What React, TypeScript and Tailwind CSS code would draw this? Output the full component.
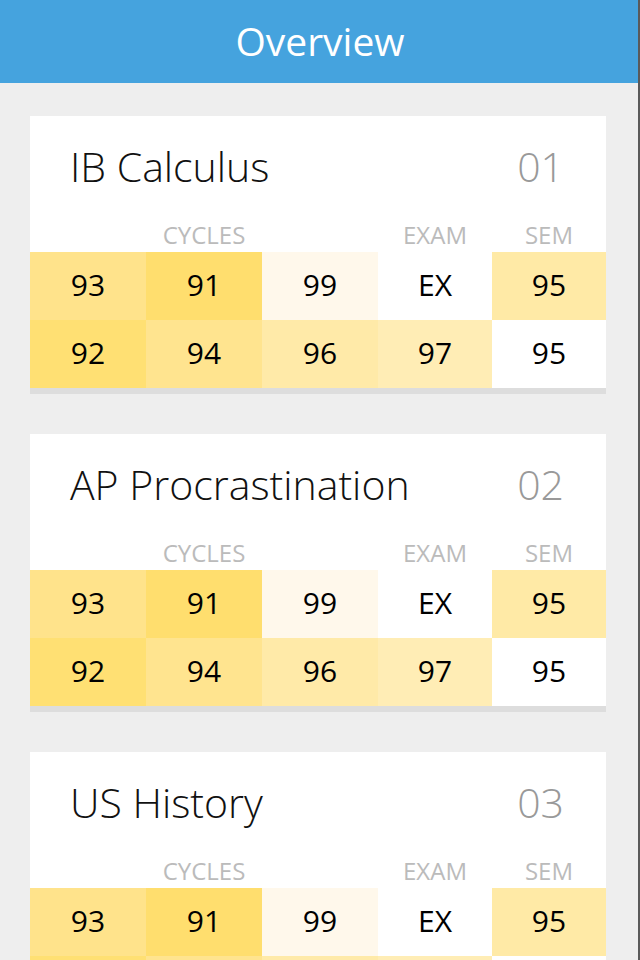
import React from "react";

interface Cell {
  value: string;
  bg: string;
}

interface Course {
  name: string;
  period: string;
  rows: Cell[][];
}

// Cell shading follows the grade: lower grade, deeper yellow
const gradeRows: Cell[][] = [
  [
    { value: "93", bg: "bg-[#ffe38b]" },
    { value: "91", bg: "bg-[#ffde6e]" },
    { value: "99", bg: "bg-[#fff8eb]" },
    { value: "EX", bg: "bg-white" },
    { value: "95", bg: "bg-[#ffeaa6]" },
  ],
  [
    { value: "92", bg: "bg-[#ffe073]" },
    { value: "94", bg: "bg-[#ffe48f]" },
    { value: "96", bg: "bg-[#ffeaa8]" },
    { value: "97", bg: "bg-[#ffedb5]" },
    { value: "95", bg: "bg-white" },
  ],
];

const COURSES: Course[] = [
  { name: "IB Calculus", period: "01", rows: gradeRows },
  { name: "AP Procrastination", period: "02", rows: gradeRows },
  { name: "US History", period: "03", rows: gradeRows },
];

const cols = "grid grid-cols-[116px_116px_116px_114px_114px]";

const CourseCard: React.FC<{ course: Course }> = ({ course }) => {
  return (
    <div className="bg-white border-b-[6px] border-[#dddddd]">
      {/* Title row */}
      <div className="h-[106px] flex items-center justify-between pl-10 pr-[42px] pb-[5px]">
        <span className="text-[41px] font-light text-[#111]">{course.name}</span>
        <span className="text-[41px] font-light text-[#999]">{course.period}</span>
      </div>

      {/* Column labels */}
      <div className={`${cols} h-[30px] items-center pb-[5px] text-[24px] leading-none text-[#bbbbbb] text-center`}>
        <span />
        <span>CYCLES</span>
        <span />
        <span>EXAM</span>
        <span>SEM</span>
      </div>

      {/* Grades */}
      {course.rows.map((row, i) => (
        <div key={i} className={cols}>
          {row.map((cell, j) => (
            <div
              key={j}
              className={`h-[68px] flex items-center justify-center pb-[3px] text-[30px] text-black ${cell.bg}`}
            >
              {cell.value}
            </div>
          ))}
        </div>
      ))}
    </div>
  );
};

export default function App() {
  return (
    <div
      className="h-[960px] overflow-hidden bg-[#eeeeee] border-r-2 border-[#5a5a5a]"
      style={{ fontFamily: '"Open Sans", sans-serif' }}
    >
      <header className="h-[83px] bg-[#45a3de] flex items-center justify-center">
        <h1 className="text-[39px] font-normal text-white pl-[2px]">Overview</h1>
      </header>

      <main className="flex flex-col gap-10 pt-[33px] pl-[30px] pr-[32px]">
        {COURSES.map((c) => (
          <CourseCard key={c.period} course={c} />
        ))}
      </main>
    </div>
  );
}
